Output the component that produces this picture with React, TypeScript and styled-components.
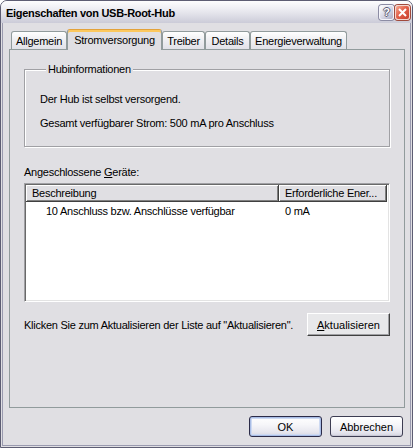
import styled, { createGlobalStyle } from "styled-components";

const GlobalStyle = createGlobalStyle`
  html, body {
    margin: 0;
    padding: 0;
    background: #ffffff;
  }
  body {
    font-family: "Liberation Sans", Arial, sans-serif;
    font-size: 11px;
    letter-spacing: -0.25px;
    color: #000;
  }
`;

const Window = styled.div`
  width: 413px;
  height: 448px;
  box-sizing: border-box;
  border: 1px solid #5d5d73;
  border-radius: 7px 7px 0 0;
  background: #e0dfe3;
  display: flex;
  flex-direction: column;
  overflow: hidden;
`;

const TitleBar = styled.div`
  height: 22px;
  flex: none;
  display: flex;
  align-items: center;
  padding: 0 2px 0 5px;
  background: linear-gradient(#fdfdfe 0%, #eeeef3 35%, #dcdce5 70%, #cbcbd8 100%);
`;

const Title = styled.div`
  flex: 1;
  font-weight: bold;
  font-size: 11px;
  letter-spacing: -0.3px;
  padding-top: 1px;
`;

const CaptionButton = styled.div<{ $close?: boolean }>`
  width: 15px;
  height: 15px;
  box-sizing: border-box;
  margin-left: 1px;
  border-radius: 3px;
  display: flex;
  align-items: center;
  justify-content: center;
  border: 1px solid ${(p) => (p.$close ? "#f4d8d0" : "#f4f4fa")};
  box-shadow: 0 0 0 1px ${(p) => (p.$close ? "#a04a3c" : "#8c8ca4")};
  background: ${(p) =>
    p.$close
      ? "linear-gradient(135deg, #f6a890 0%, #e2604a 45%, #c8402c 100%)"
      : "linear-gradient(135deg, #ffffff 0%, #d8d8e6 50%, #aeaec4 100%)"};
  color: #fff;
  font-weight: bold;
  font-size: 11px;
  letter-spacing: 0;
  text-shadow: 1px 0 #5a5a74, -1px 0 #5a5a74, 0 1px #5a5a74, 0 -1px #5a5a74;
`;

const Body = styled.div`
  flex: 1;
  margin: 0 1px 1px;
  border: 1px solid #9a9aaf;
  border-top: none;
  padding: 6px 5px 8px 6px;
  display: flex;
  flex-direction: column;
  min-height: 0;
`;

const TabStrip = styled.div`
  height: 20px;
  flex: none;
  display: flex;
  align-items: flex-end;
  padding-left: 2px;
  position: relative;
  z-index: 1;
`;

const Tab = styled.div<{ $active?: boolean; $w: number }>`
  width: ${(p) => p.$w}px;
  height: ${(p) => (p.$active ? 21 : 18)}px;
  margin-bottom: ${(p) => (p.$active ? -1 : 0)}px;
  box-sizing: border-box;
  border: 1px solid #919b9c;
  border-bottom: none;
  border-top-color: ${(p) => (p.$active ? "#e3a23b" : "#919b9c")};
  border-radius: 3px 3px 0 0;
  display: flex;
  align-items: center;
  justify-content: center;
  padding-top: ${(p) => (p.$active ? 0 : 1)}px;
  background: ${(p) =>
    p.$active ? "#e0dfe3" : "linear-gradient(#ffffff 0%, #f1f1f4 40%, #e2e2e8 100%)"};
  box-shadow: ${(p) => (p.$active ? "inset 0 2px 0 #fcc85e" : "none")};
  white-space: nowrap;
`;

const TabPanel = styled.div`
  flex: 1;
  border: 1px solid #919b9c;
  background: #e0dfe3;
  padding: 13px 14px 0;
  display: flex;
  flex-direction: column;
`;

const Group = styled.fieldset`
  margin: 0;
  padding: 17px 15px 16px;
  border: 1px solid #a0a0a4;
  box-shadow: inset 1px 1px 0 #fff, 1px 1px 0 #fff;
  display: flex;
  flex-direction: column;
  gap: 11px;
`;

const GroupLabel = styled.legend`
  margin-left: 6px;
  padding: 0 2px;
  line-height: 13px;
  background: #e0dfe3;
`;

const Line = styled.div`
  line-height: 13px;
`;

const Label = styled.div`
  line-height: 13px;
  margin-top: 19px;
`;

const U = styled.span`
  text-decoration: underline;
`;

const ListBox = styled.div`
  height: 119px;
  margin-top: 4px;
  box-sizing: border-box;
  border: 1px solid;
  border-color: #a0a0a4 #ffffff #ffffff #a0a0a4;
  box-shadow: inset 1px 1px 0 #696969, inset -1px -1px 0 #e3e3e3;
  padding: 1px;
  background: #fff;
  display: flex;
  flex-direction: column;
`;

const HeaderRow = styled.div`
  display: flex;
  height: 17px;
  background: #fff;
`;

const HeaderCell = styled.div<{ $w: number }>`
  width: ${(p) => p.$w}px;
  box-sizing: border-box;
  height: 17px;
  padding-left: 6px;
  display: flex;
  align-items: center;
  background: #e0dfe3;
  border-right: 1px solid #404040;
  border-bottom: 1px solid #404040;
  box-shadow: inset 1px 1px 0 #fff, inset -1px -1px 0 #808080;
  white-space: nowrap;
  overflow: hidden;
`;

const Row = styled.div`
  display: flex;
  height: 17px;
  align-items: center;
`;

const Cell = styled.div<{ $w?: number; $indent: number }>`
  width: ${(p) => (p.$w ? `${p.$w}px` : "auto")};
  padding-left: ${(p) => p.$indent}px;
  box-sizing: border-box;
  white-space: nowrap;
`;

const RefreshRow = styled.div`
  margin-top: 11px;
  display: flex;
  align-items: center;
  justify-content: space-between;
`;

const Hint = styled.span`
  white-space: nowrap;
`;

const ClassicButton = styled.button`
  width: 83px;
  height: 23px;
  font: inherit;
  color: #000;
  background: #e8e8ea;
  border: 1px solid;
  border-color: #ffffff #404040 #404040 #ffffff;
  box-shadow: inset -1px -1px 0 #a0a0a4;
  padding: 0;
`;

const ButtonRow = styled.div`
  margin-top: 8px;
  display: flex;
  justify-content: flex-end;
  gap: 8px;
  padding-right: 2px;
`;

const XpButton = styled.button<{ $default?: boolean }>`
  width: 73px;
  height: 21px;
  font: inherit;
  color: #000;
  padding: 0;
  border-radius: 3px;
  border: 1px solid ${(p) => (p.$default ? "#2b2b48" : "#3d3d52")};
  background: linear-gradient(#ffffff 0%, #f6f6f9 40%, #e6e6ee 80%, #d4d4e0 100%);
  box-shadow: ${(p) =>
    p.$default
      ? "inset 0 0 0 1px #a9bde6, inset 0 0 0 2px #cedaf2"
      : "inset 0 -1px 0 #c8c8d4"};
`;

function CloseGlyph() {
  return (
    <svg width="9" height="9" viewBox="0 0 9 9">
      <path d="M1 1 L8 8 M8 1 L1 8" stroke="#fff" strokeWidth="2" />
    </svg>
  );
}

export default function App() {
  return (
    <>
      <GlobalStyle />
      <Window>
        <TitleBar>
          <Title>Eigenschaften von USB-Root-Hub</Title>
          <CaptionButton>?</CaptionButton>
          <CaptionButton $close>
            <CloseGlyph />
          </CaptionButton>
        </TitleBar>
        <Body>
          <TabStrip>
            <Tab $w={56}>Allgemein</Tab>
            <Tab $w={95} $active>
              Stromversorgung
            </Tab>
            <Tab $w={43}>Treiber</Tab>
            <Tab $w={45}>Details</Tab>
            <Tab $w={97}>Energieverwaltung</Tab>
          </TabStrip>
          <TabPanel>
            <Group>
              <GroupLabel>Hubinformationen</GroupLabel>
              <Line>Der Hub ist selbst versorgend.</Line>
              <Line>Gesamt verfügbarer Strom: 500 mA pro Anschluss</Line>
            </Group>
            <Label>
              Angeschlossene <U>G</U>eräte:
            </Label>
            <ListBox>
              <HeaderRow>
                <HeaderCell $w={253}>Beschreibung</HeaderCell>
                <HeaderCell $w={108}>Erforderliche Ener...</HeaderCell>
              </HeaderRow>
              <Row>
                <Cell $w={253} $indent={20}>
                  10 Anschluss bzw. Anschlüsse verfügbar
                </Cell>
                <Cell $indent={6}>0 mA</Cell>
              </Row>
            </ListBox>
            <RefreshRow>
              <Hint>Klicken Sie zum Aktualisieren der Liste auf "Aktualisieren".</Hint>
              <ClassicButton>
                <U>A</U>ktualisieren
              </ClassicButton>
            </RefreshRow>
          </TabPanel>
          <ButtonRow>
            <XpButton $default>OK</XpButton>
            <XpButton>Abbrechen</XpButton>
          </ButtonRow>
        </Body>
      </Window>
    </>
  );
}
